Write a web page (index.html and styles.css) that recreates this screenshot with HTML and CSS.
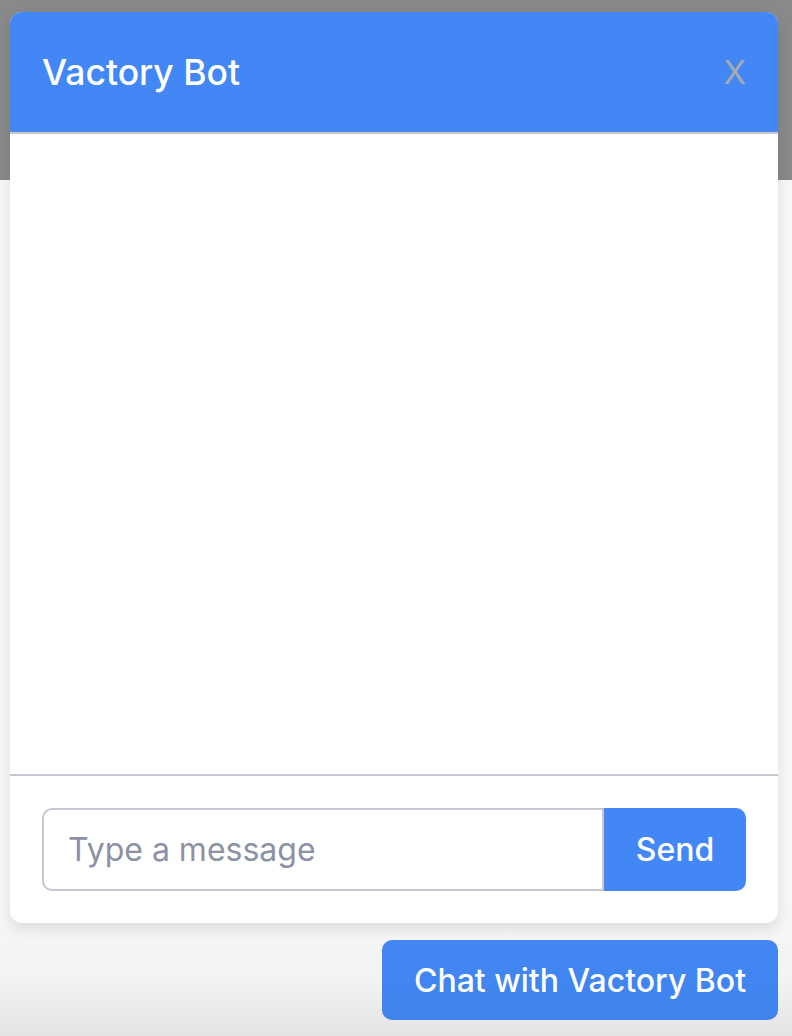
FILE: index.html
```html
<!DOCTYPE html>
<html lang="en">
<head>
<meta charset="utf-8">
<title>Vactory Bot</title>
<link rel="stylesheet" href="styles.css">
</head>
<body>
<div class="page">
  <div class="widget">
    <section class="chat-window">
      <header class="chat-header">
        <h1 class="chat-title">Vactory Bot</h1>
        <button class="close-btn" type="button">X</button>
      </header>
      <div class="chat-messages"></div>
      <form class="chat-form">
        <input class="chat-input" type="text" placeholder="Type a message">
        <button class="send-btn" type="button">Send</button>
      </form>
    </section>
    <button class="launcher" type="button">Chat with Vactory Bot</button>
  </div>
</div>
</body>
</html>
```

FILE: styles.css
```css
* { box-sizing: border-box; }
html, body { margin: 0; padding: 0; }
body {
  width: 792px;
  height: 1036px;
  overflow: hidden;
  font-family: Inter, "Liberation Sans", sans-serif;
  background:
    linear-gradient(to bottom, #898989 0, #898989 180px, transparent 180px),
    linear-gradient(to bottom, #f7f7f7 0, #f7f7f7 900px, #f3f3f3 980px, #e4e4e4 1036px);
}
.page {
  height: 100%;
  padding: 12px 14px 16px 10px;
}
.widget {
  display: flex;
  flex-direction: column;
  align-items: flex-end;
  gap: 17px;
}
.chat-window {
  width: 768px;
  height: 911px;
  background: #fff;
  border-radius: 12px;
  overflow: hidden;
  display: flex;
  flex-direction: column;
  box-shadow: 0 6px 14px rgba(0, 0, 0, 0.10);
}
.chat-header {
  height: 122px;
  flex: none;
  background: #4287f5;
  border-bottom: 2px solid #c8c9ce;
  display: flex;
  align-items: center;
  justify-content: space-between;
  padding: 0 32px 0 32px;
}
.chat-title {
  margin: 0;
  color: #fff;
  font-size: 35.5px;
  font-weight: 500;
  line-height: 1;
  padding-top: 2px;
}
.close-btn {
  border: 0;
  background: none;
  padding: 0;
  color: #a6a9b2;
  font-family: inherit;
  font-size: 33px;
  font-weight: 400;
  line-height: 1;
  padding-top: 1px;
}
.chat-messages {
  flex: 1;
  border-bottom: 2px solid #c4c7d0;
}
.chat-form {
  flex: none;
  display: flex;
  padding: 32px;
  margin: 0;
}
.chat-input {
  flex: 1;
  height: 83px;
  border: 2px solid #c4c7d0;
  border-radius: 10px 0 0 10px;
  padding: 0 24px;
  font-family: inherit;
  font-size: 32px;
  color: #333;
  outline: none;
}
.chat-input::placeholder { color: #8b92a3; }
.send-btn {
  width: 142px;
  height: 83px;
  border: 0;
  border-radius: 0 10px 10px 0;
  background: #4287f5;
  color: #fff;
  font-family: inherit;
  font-size: 32px;
  font-weight: 500;
}
.launcher {
  width: 396px;
  height: 80px;
  border: 0;
  border-radius: 10px;
  background: linear-gradient(to bottom, #4287f5, #3f83ec);
  color: #fff;
  font-family: inherit;
  font-size: 32px;
  font-weight: 500;
  padding: 0;
}
```
